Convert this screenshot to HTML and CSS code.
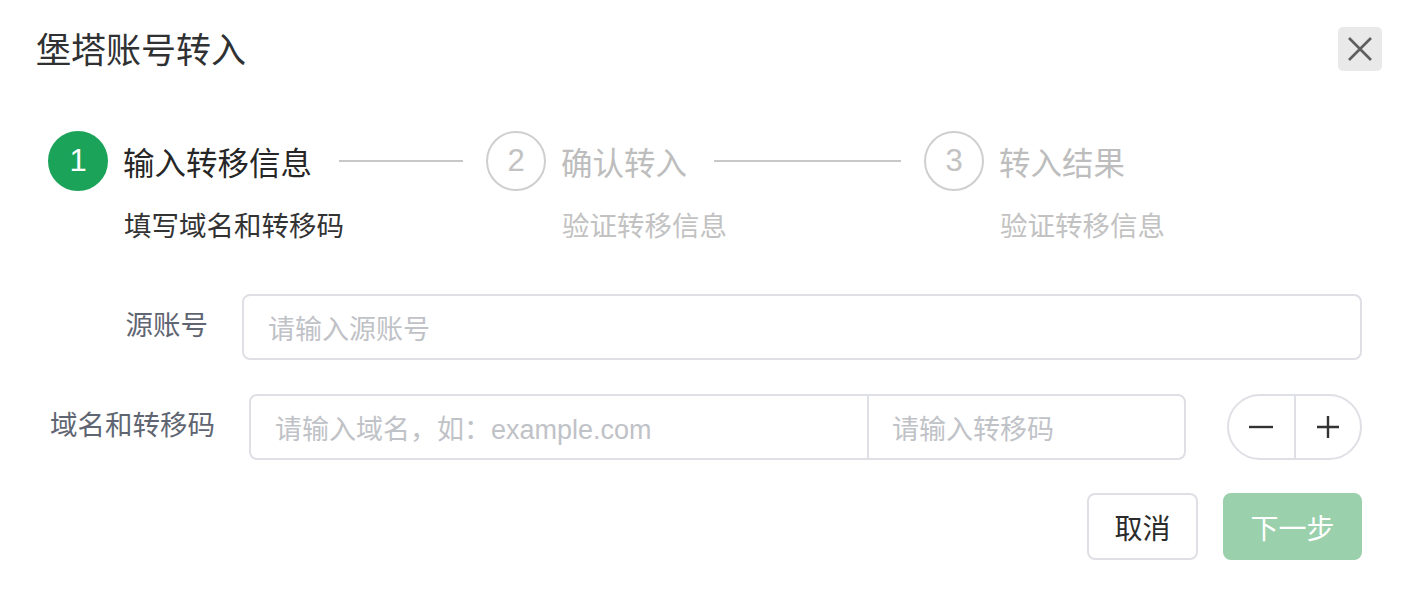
FILE: index.html
```html
<!DOCTYPE html>
<html lang="zh-CN">
<head>
<meta charset="utf-8">
<title>堡塔账号转入</title>
<link rel="stylesheet" href="styles.css">
</head>
<body>
<div class="dialog">
  <div class="header">
    <div class="title">堡塔账号转入</div>
    <button class="close" aria-label="关闭">
      <svg width="26" height="24" viewBox="0 0 26 24"><path d="M2 1 L24 23 M24 1 L2 23" stroke="#5e5e5e" stroke-width="2.6" fill="none"/></svg>
    </button>
  </div>

  <div class="steps">
    <div class="step active">
      <div class="step-head">
        <div class="step-icon">1</div>
        <div class="step-title">输入转移信息</div>
        <div class="step-line"></div>
      </div>
      <div class="step-desc">填写域名和转移码</div>
    </div>
    <div class="step">
      <div class="step-head">
        <div class="step-icon">2</div>
        <div class="step-title">确认转入</div>
        <div class="step-line"></div>
      </div>
      <div class="step-desc">验证转移信息</div>
    </div>
    <div class="step last">
      <div class="step-head">
        <div class="step-icon">3</div>
        <div class="step-title">转入结果</div>
      </div>
      <div class="step-desc">验证转移信息</div>
    </div>
  </div>

  <div class="form">
    <div class="form-row">
      <label class="label label-1">源账号</label>
      <div class="input input-full">请输入源账号</div>
    </div>
    <div class="form-row">
      <label class="label label-2">域名和转移码</label>
      <div class="pair">
        <div class="pair-domain">请输入域名，如：example.com</div>
        <div class="pair-code">请输入转移码</div>
      </div>
      <div class="stepper">
        <div class="stepper-btn"><svg width="26" height="26" viewBox="0 0 26 26"><path d="M1 13 H25" stroke="#333" stroke-width="2.4"/></svg></div>
        <div class="stepper-btn"><svg width="26" height="26" viewBox="0 0 26 26"><path d="M2 13 H24 M13 2 V24" stroke="#333" stroke-width="2.4"/></svg></div>
      </div>
    </div>
  </div>

  <div class="footer">
    <button class="btn btn-cancel">取消</button>
    <button class="btn btn-next">下一步</button>
  </div>
</div>
</body>
</html>
```

FILE: styles.css
```css
html, body {
  margin: 0;
  padding: 0;
  background: #ffffff;
}

body {
  font-family: "Liberation Sans", "Noto Sans CJK SC", sans-serif;
  color: #333333;
  width: 1414px;
  height: 598px;
  overflow: hidden;
}

.dialog {
  display: flex;
  flex-direction: column;
}

.header {
  display: flex;
  align-items: center;
  justify-content: space-between;
  height: 48px;
  padding: 24px 32px 0 36px;
}

.title {
  font-size: 35px;
  line-height: 48px;
  color: #303133;
  font-family: "Noto Sans CJK SC", sans-serif;
}

.close {
  width: 44px;
  height: 44px;
  border: none;
  border-radius: 5px;
  background: #e9e9e9;
  display: flex;
  align-items: center;
  justify-content: center;
  padding: 0;
  margin-top: 2px;
}

.steps {
  display: flex;
  margin-top: 59px;
  padding: 0 52px 0 48px;
}

.step {
  flex: 1 1 0;
  display: flex;
  flex-direction: column;
}

.step-head {
  display: flex;
  align-items: center;
  height: 60px;
}

.step-icon {
  width: 56px;
  height: 56px;
  border: 2px solid #cfcfcf;
  border-radius: 50%;
  display: flex;
  align-items: center;
  justify-content: center;
  font-size: 31px;
  color: #c2c2c2;
  flex: none;
}

.step.active .step-icon {
  background: #1ca35a;
  border-color: #1ca35a;
  color: #ffffff;
}

.step-title {
  margin-left: 15px;
  font-size: 31.5px;
  line-height: 60px;
  color: #bdbdbd;
  font-family: "Noto Sans CJK SC", sans-serif;
  white-space: nowrap;
}

.step.active .step-title {
  color: #262626;
}

.step-line {
  flex: 1;
  height: 2px;
  background: #c8c8c8;
  margin: 0 23px 0 27px;
}

.step-desc {
  margin-left: 76px;
  margin-top: 13px;
  font-size: 27.5px;
  line-height: 40px;
  color: #c2c2c2;
  font-family: "Noto Sans CJK SC", sans-serif;
  white-space: nowrap;
}

.step.active .step-desc {
  color: #333333;
}

.form {
  margin-top: 50px;
  padding-right: 52px;
  display: flex;
  flex-direction: column;
  gap: 34px;
}

.form-row {
  display: flex;
  align-items: flex-start;
}

.label {
  flex: none;
  box-sizing: border-box;
  text-align: right;
  padding-right: 34px;
  font-size: 27.5px;
  line-height: 58px;
  color: #5f6672;
  font-family: "Noto Sans CJK SC", sans-serif;
}

.label-1 { width: 242px; }
.label-2 { width: 249px; }

.input,
.pair {
  box-sizing: border-box;
  height: 66px;
  border: 2px solid #dfe0e5;
  border-radius: 8px;
  font-size: 27px;
  color: #bfc2c7;
  font-family: "Noto Sans CJK SC", sans-serif;
}

.input {
  flex: 1;
  display: flex;
  align-items: center;
  padding-left: 24px;
}

.pair {
  width: 937px;
  display: flex;
}

.pair-domain {
  flex: 1;
  display: flex;
  align-items: center;
  padding-left: 24px;
  border-right: 2px solid #dfe0e5;
  font-family: "Liberation Sans", "Noto Sans CJK SC", sans-serif;
}

.pair-code {
  width: 292px;
  display: flex;
  align-items: center;
  padding-left: 23px;
  font-family: "Noto Sans CJK SC", sans-serif;
}

.stepper {
  box-sizing: border-box;
  margin-left: 41px;
  width: 135px;
  height: 66px;
  border: 2px solid #dfe0e5;
  border-radius: 33px;
  display: flex;
}

.stepper-btn {
  flex: 1;
  display: flex;
  align-items: center;
  justify-content: center;
}

.stepper-btn:first-child {
  border-right: 2px solid #dfe0e5;
}

.footer {
  display: flex;
  justify-content: flex-end;
  gap: 25px;
  margin-top: 33px;
  padding-right: 52px;
}

.btn {
  height: 67px;
  box-sizing: border-box;
  padding: 0 25.5px;
  border-radius: 8px;
  font-size: 28px;
  font-family: "Noto Sans CJK SC", sans-serif;
  line-height: 1;
}

.btn-cancel {
  background: #ffffff;
  border: 2px solid #dfe0e5;
  color: #2b2b2b;
}

.btn-next {
  background: #9ad0ab;
  border: 2px solid #9ad0ab;
  color: #ffffff;
}
```
